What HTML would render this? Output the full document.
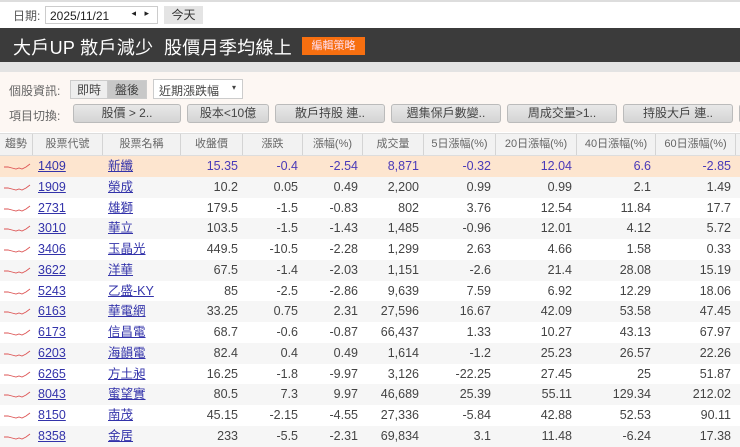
<!DOCTYPE html>
<html><head><meta charset="utf-8"><style>
*{box-sizing:border-box;margin:0;padding:0}
body{width:740px;height:442px;overflow:hidden;background:#fff;font-family:"Liberation Sans","Noto Sans CJK TC",sans-serif;position:relative;color:#444}
.abs{position:absolute}
.top{left:0;top:0;width:740px;height:2px;background:#ddd}
.lbl{left:13px;top:7px;font-size:12px;color:#555}
.date{left:45px;top:6px;width:113px;height:18px;border:1px solid #ccc;font-size:12px;padding:2px 4px;color:#222}
.arr{position:absolute;right:5px;top:1px;font-size:9px;color:#222;letter-spacing:3px}
.today{left:164px;top:6px;width:39px;height:18px;background:#e4e4e4;font-size:12px;text-align:center;line-height:18px;color:#333}
.bar{left:0;top:28px;width:740px;height:34px;background:#3b3b3b}
.title{left:13px;top:34px;font-size:18px;color:#fff;letter-spacing:.3px}
.edit{left:302px;top:37px;width:63px;height:18px;background:#f76f10;color:#fde;font-size:11px;text-align:center;line-height:18px}
.strip{left:0;top:62px;width:740px;height:10px;background:#e3e3e3}
.panel{left:0;top:72px;width:740px;height:60px;background:#fdf7f3}
.pl{font-size:12px;color:#666}
.seg{top:80px;height:19px;font-size:12px;text-align:center;line-height:18px;border:1px solid #ccc}
.sel{left:153px;top:79px;width:90px;height:20px;border:1px solid #ccc;background:#fff;font-size:12px;padding:2px 5px;color:#444}
.btn{top:104px;height:19px;border:1px solid #bbb;border-radius:3px;background:linear-gradient(#e8e8e8,#d4d4d4);font-size:12px;text-align:center;line-height:17px;color:#444}
.hd{left:0;top:133px;width:740px;height:23px;background:#f2f2f2;border-top:1px solid #ddd;border-bottom:1px solid #ddd}
.c{position:absolute;top:0;height:100%;font-size:11.5px;white-space:nowrap;overflow:hidden}
.hd .c{border-right:1px solid #d4d4d4;text-align:center;line-height:21px;color:#666;font-size:11px}
.row{position:absolute;left:0;width:740px;height:20.75px}
.row .c{line-height:20.75px;text-align:right;padding-right:5px;font-size:12.5px}
.row .a{text-align:left;color:#33a;text-decoration:underline;padding-left:5px;font-size:12.5px}
.row.f{background:#fde5cf}.row.f .c{color:#4a3ab8}.row.f .a{color:#33a}
.row.g{background:#f6f6f6}
svg{position:absolute;left:4px;top:6px}
</style></head><body>
<div class="abs top"></div>
<div class="abs lbl">日期:</div>
<div class="abs date">2025/11/21<span class="arr">◂ ▸</span></div>
<div class="abs today">今天</div>
<div class="abs bar"></div>
<div class="abs title">大戶UP 散戶減少&nbsp; 股價月季均線上</div>
<div class="abs edit">編輯策略</div>
<div class="abs strip"></div>
<div class="abs panel"></div>
<div class="abs pl" style="left:9px;top:82px">個股資訊:</div>
<div class="abs seg" style="left:70px;width:38px;background:#eee">即時</div>
<div class="abs seg" style="left:107px;width:40px;background:#c8c8c8">盤後</div>
<div class="abs sel">近期漲跌幅<span style="position:absolute;right:6px;top:3px;font-size:8px">▾</span></div>
<div class="abs pl" style="left:9px;top:107px">項目切換:</div>
<div class="abs btn" style="left:73px;width:108px">股價 &gt; 2..</div>
<div class="abs btn" style="left:187px;width:82px">股本&lt;10億</div>
<div class="abs btn" style="left:275px;width:110px">散戶持股 連..</div>
<div class="abs btn" style="left:391px;width:110px">週集保戶數變..</div>
<div class="abs btn" style="left:507px;width:110px">周成交量&gt;1..</div>
<div class="abs btn" style="left:623px;width:110px">持股大戶 連..</div>
<div class="abs btn" style="left:739px;width:20px"></div>
<div class="abs hd">
<div class="c" style="left:0;width:33px">趨勢</div>
<div class="c" style="left:33px;width:70px">股票代號</div>
<div class="c" style="left:103px;width:78px">股票名稱</div>
<div class="c" style="left:181px;width:62px">收盤價</div>
<div class="c" style="left:243px;width:60px">漲跌</div>
<div class="c" style="left:303px;width:60px">漲幅(%)</div>
<div class="c" style="left:363px;width:61px">成交量</div>
<div class="c" style="left:424px;width:72px">5日漲幅(%)</div>
<div class="c" style="left:496px;width:81px">20日漲幅(%)</div>
<div class="c" style="left:577px;width:79px">40日漲幅(%)</div>
<div class="c" style="left:656px;width:80px">60日漲幅(%)</div>
</div>
<div id="rows"></div>
<script>
var d=[["1409","新纖","15.35","-0.4","-2.54","8,871","-0.32","12.04","6.6","-2.85"],
["1909","榮成","10.2","0.05","0.49","2,200","0.99","0.99","2.1","1.49"],
["2731","雄獅","179.5","-1.5","-0.83","802","3.76","12.54","11.84","17.7"],
["3010","華立","103.5","-1.5","-1.43","1,485","-0.96","12.01","4.12","5.72"],
["3406","玉晶光","449.5","-10.5","-2.28","1,299","2.63","4.66","1.58","0.33"],
["3622","洋華","67.5","-1.4","-2.03","1,151","-2.6","21.4","28.08","15.19"],
["5243","乙盛-KY","85","-2.5","-2.86","9,639","7.59","6.92","12.29","18.06"],
["6163","華電網","33.25","0.75","2.31","27,596","16.67","42.09","53.58","47.45"],
["6173","信昌電","68.7","-0.6","-0.87","66,437","1.33","10.27","43.13","67.97"],
["6203","海韻電","82.4","0.4","0.49","1,614","-1.2","25.23","26.57","22.26"],
["6265","方土昶","16.25","-1.8","-9.97","3,126","-22.25","27.45","25","51.87"],
["8043","蜜望實","80.5","7.3","9.97","46,689","25.39","55.11","129.34","212.02"],
["8150","南茂","45.15","-2.15","-4.55","27,336","-5.84","42.88","52.53","90.11"],
["8358","金居","233","-5.5","-2.31","69,834","3.1","11.48","-6.24","17.38"]];
var L=[33,103,181,243,303,363,424,496,577,656,736];
var h="";
for(var i=0;i<d.length;i++){var r=d[i];var cl=i==0?"f":(i%2?"g":"");
h+='<div class="row '+cl+'" style="top:'+(156+i*20.75)+'px"><svg width="27" height="10"><polyline points="0,5 4,5 8,6 12,7 15,6 18,7 22,5 26,2" fill="none" stroke="#d55" stroke-width="0.9"/></svg>';
for(var j=0;j<10;j++){var a=j<2?" a":"";h+='<div class="c'+a+'" style="left:'+L[j]+'px;width:'+(L[j+1]-L[j])+'px">'+r[j]+'</div>';}
h+='</div>';}
document.getElementById("rows").innerHTML=h;
</script>
</body></html>
